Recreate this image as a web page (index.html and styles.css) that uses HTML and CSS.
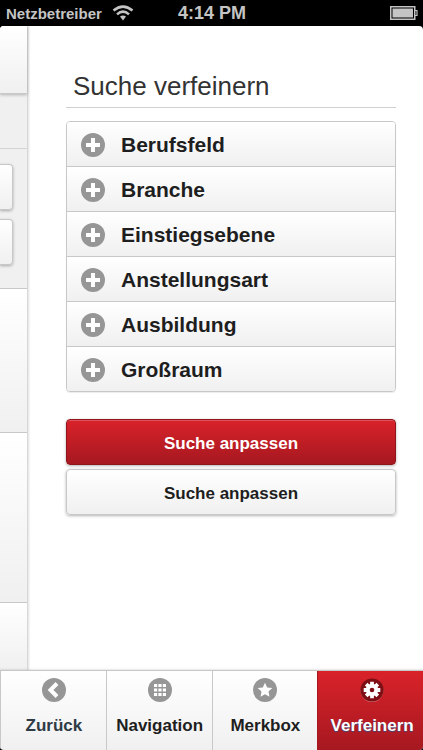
FILE: index.html
```html
<!DOCTYPE html>
<html lang="de">
  <head>
    <meta charset="UTF-8" />
    <meta name="viewport" content="width=device-width, initial-scale=1.0" />
    <title>Suche verfeinern</title>
    <link rel="stylesheet" href="styles.css">
  </head>
  <body>
    <!-- Shared plus icon for the filter rows -->
    <svg class="symbols" aria-hidden="true">
      <symbol id="plus" viewBox="0 0 24 24">
        <circle cx="12" cy="12" r="12" fill="#969696" />
        <path d="M12 5v14M5 12h14" stroke="#fff" stroke-width="4" />
      </symbol>
    </svg>

    <header class="status-bar">
      <div class="carrier">
        <span>Netzbetreiber</span>
        <svg width="22" height="16" viewBox="0 0 22 16" fill="none" stroke="#c4c4c4" stroke-width="2.6">
          <path d="M1.5 5.6Q11-2.4 20.500 5.600" />
          <path d="M5 9.400Q11 4 17 9.400" />
          <path d="M8 11.600Q11 9.400 14 11.600L11 15.400Z" fill="#c4c4c4" stroke="none" />
        </svg>
      </div>
      <span class="clock">4:14 PM</span>
      <div class="battery">
        <svg width="28" height="14" viewBox="0 0 28 14">
          <rect x=".75" y=".75" width="24" height="12.500" fill="none" stroke="#c4c4c4" stroke-width="1.500" />
          <rect x="2.500" y="2.500" width="20.500" height="9" fill="#c4c4c4" />
          <path d="M25 4.500h2v5h-2" fill="none" stroke="#c4c4c4" stroke-width="1.200" />
        </svg>
      </div>
    </header>

    <div class="screen">
      <!-- Edge of the result page pushed to the left -->
      <div class="page-edge" aria-hidden="true">
        <div class="edge-header"></div>
        <div class="edge-title"></div>
        <div class="edge-buttons">
          <div class="edge-button"></div>
          <div class="edge-button"></div>
        </div>
        <div class="edge-result"></div>
        <div class="edge-result edge-result-tall"></div>
        <div class="edge-result edge-result-last"></div>
      </div>

      <main class="panel">
        <h1>Suche verfeinern</h1>
        <ul class="filters">
          <li><button type="button"><svg><use href="#plus" /></svg>Berufsfeld</button></li>
          <li><button type="button"><svg><use href="#plus" /></svg>Branche</button></li>
          <li><button type="button"><svg><use href="#plus" /></svg>Einstiegsebene</button></li>
          <li><button type="button"><svg><use href="#plus" /></svg>Anstellungsart</button></li>
          <li><button type="button"><svg><use href="#plus" /></svg>Ausbildung</button></li>
          <li><button type="button"><svg><use href="#plus" /></svg>Großraum</button></li>
        </ul>
        <div class="actions">
          <button type="button" class="btn btn-primary">Suche anpassen</button>
          <button type="button" class="btn">Suche anpassen</button>
        </div>
      </main>
    </div>

    <nav class="tab-bar">
      <a href="#zurueck" class="tab tab-back">
        <svg viewBox="0 0 24 24">
          <circle cx="12" cy="12" r="12" fill="#969696" />
          <path d="M15 5.500L8.500 12l6.500 6.500" fill="none" stroke="#fff" stroke-width="4" />
        </svg>
        Zurück
      </a>
      <a href="#navigation" class="tab">
        <svg viewBox="0 0 24 24">
          <circle cx="12" cy="12" r="12" fill="#969696" />
          <path d="M6 7.500h12M6 12h12M6 16.500h12" fill="none" stroke="#fff" stroke-width="3.200" stroke-dasharray="3.200 1.200" />
        </svg>
        Navigation
      </a>
      <a href="#merkbox" class="tab">
        <svg viewBox="0 0 24 24">
          <circle cx="12" cy="12" r="12" fill="#969696" />
          <path d="M12 4.800l2.200 4.700 5.100.6-3.800 3.500 1 5.100-4.500-2.500-4.500 2.500 1-5.100-3.800-3.500 5.100-.6z" fill="#fff" />
        </svg>
        Merkbox
      </a>
      <a href="#verfeinern" class="tab tab-active" aria-current="page">
        <svg viewBox="0 0 24 24">
          <circle cx="12" cy="12.600" r="11.400" fill="#e8888b" />
          <circle cx="12" cy="12" r="11.600" fill="#7d0f15" />
          <path d="M12 3.700v16.600M3.700 12h16.600M6.200 6.200l11.600 11.600M17.800 6.200l-11.600 11.600" stroke="#fff" stroke-width="3.800" />
          <circle cx="12" cy="12" r="6.200" fill="#fff" />
          <circle cx="12" cy="12" r="2.300" fill="#7d0f15" />
        </svg>
        Verfeinern
      </a>
    </nav>
  </body>
</html>
```
FILE: styles.css
```css
* {
  margin: 0;
  padding: 0;
  box-sizing: border-box;
}

body {
  font-family: "Liberation Sans", Arial, Helvetica, sans-serif;
  background-color: #000;
  color: #1e1e1e;
  height: 100vh;
  overflow: hidden;
  display: flex;
  flex-direction: column;
}

button {
  font-family: inherit;
  color: inherit;
  cursor: pointer;
}

.symbols {
  display: none;
}

/* Status bar */
.status-bar {
  display: grid;
  grid-template-columns: 1fr auto 1fr;
  align-items: center;
  height: 26px;
  padding: 0 5px 0 6px;
  color: #c4c4c4;
  font-weight: bold;
}

.carrier {
  display: flex;
  align-items: center;
  gap: 10px;
  font-size: 15px;
}

.clock {
  font-size: 18px;
}

.battery {
  display: flex;
  justify-content: flex-end;
}

/* Content */
.screen {
  flex: 1;
  min-height: 0;
  display: flex;
  background-color: #fff;
  border-radius: 4px 4px 0 0;
  overflow: hidden;
}

.page-edge {
  width: 28px;
  flex-shrink: 0;
  display: flex;
  flex-direction: column;
  background-color: #f0f0f0;
  border-right: 1px solid #d8d8d8;
  box-shadow: 1px 0 2px rgba(0, 0, 0, 0.12);
}

.edge-header {
  height: 68px;
  background: linear-gradient(#fff, #f0f0f0);
  border-bottom: 1px solid #c8c8c8;
  box-shadow: 0 1px 3px rgba(0, 0, 0, 0.25);
}

.edge-title {
  height: 55px;
  border-bottom: 1px solid #d4d4d4;
}

.edge-buttons {
  display: flex;
  flex-direction: column;
  gap: 9px;
  padding: 15px 14px 23px 0;
  border-bottom: 1px solid #c8c8c8;
}

.edge-button {
  height: 46px;
  background: linear-gradient(#fff, #f0f0f0);
  border: 1px solid #c8c8c8;
  border-left: none;
  border-radius: 0 4px 4px 0;
  box-shadow: 0 1px 3px rgba(0, 0, 0, 0.3);
}

.edge-result {
  height: 144px;
  background: linear-gradient(#fff, #f0f0f0);
  border-bottom: 1px solid #c8c8c8;
}

.edge-result-tall {
  height: 170px;
}

.edge-result-last {
  flex: 1;
  border-bottom: none;
}

.panel {
  flex: 1;
  padding: 41px 27px 0 38px;
}

h1 {
  padding: 0 7px 1px;
  border-bottom: 1px solid #d0d0d0;
  font-size: 26px;
  font-weight: normal;
  line-height: 39px;
  color: #333;
}

.filters {
  margin-top: 13px;
  list-style: none;
  border: 1px solid #c8c8c8;
  border-radius: 4px;
  box-shadow: 0 1px 1px rgba(0, 0, 0, 0.08);
  overflow: hidden;
}

.filters li + li {
  border-top: 1px solid #c8c8c8;
}

.filters button {
  display: flex;
  align-items: center;
  gap: 16px;
  width: 100%;
  height: 44px;
  padding: 2px 14px 0;
  border: none;
  background: linear-gradient(#fff, #f0f0f0);
  font-size: 21px;
  font-weight: bold;
}

.filters svg {
  width: 24px;
  height: 24px;
}

.actions {
  display: flex;
  flex-direction: column;
  gap: 4px;
  margin-top: 27px;
}

.btn {
  height: 46px;
  padding-top: 3px;
  border: 1px solid #c8c8c8;
  border-radius: 4px;
  background: linear-gradient(#fff, #f0f0f0);
  box-shadow: 0 1px 3px rgba(0, 0, 0, 0.3);
  font-size: 17px;
  font-weight: bold;
}

.btn-primary {
  border-color: #8f141b;
  background: linear-gradient(#d9222a, #a61820);
  box-shadow: inset 0 1px 0 #e0555b, 0 1px 3px rgba(0, 0, 0, 0.3);
  color: #fff;
}

/* Bottom navigation */
.tab-bar {
  display: grid;
  grid-template-columns: repeat(4, 1fr);
  height: 80px;
  background: linear-gradient(#fff, #f0f0f0);
  border-top: 1px solid #c8c8c8;
  border-radius: 0 0 4px 4px;
  box-shadow: 0 -1px 2px rgba(0, 0, 0, 0.1);
  position: relative;
  overflow: hidden;
}

.tab {
  display: flex;
  flex-direction: column;
  align-items: center;
  gap: 14px;
  padding: 7px 0 0 1px;
  border-left: 1px solid #c8c8c8;
  color: #1e1e1e;
  font-size: 17px;
  font-weight: bold;
  line-height: 20px;
  text-decoration: none;
}

.tab svg {
  width: 24px;
  height: 24px;
}

.tab-back {
  color: #2f3b44;
}

.tab-active {
  padding-left: 3px;
  border-left-color: #a61820;
  background: linear-gradient(#d9222a, #a61820);
  color: #fff;
  text-shadow: 0 1px 1px #3c4a80;
}
```
